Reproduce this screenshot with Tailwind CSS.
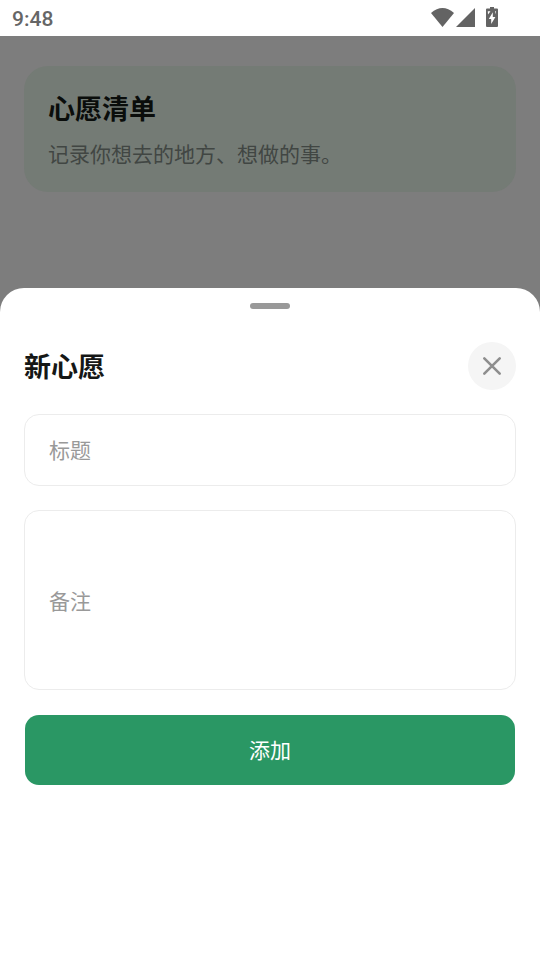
<!DOCTYPE html>
<html lang="zh-CN">
<head>
<meta charset="utf-8">
<title>心愿清单</title>
<script src="https://cdn.jsdelivr.net/npm/@tailwindcss/browser@4"></script>
</head>
<body class="relative h-[960px] w-[540px] overflow-hidden bg-[#7d7d7d] font-[Roboto,'Noto_Sans_CJK_SC',sans-serif]">
<header class="flex h-9 items-center justify-between bg-white pl-3 pr-[42px] text-[#666]">
  <span class="pt-0.5 text-[21px] leading-6 font-medium">9:48</span>
  <div class="flex items-start">
    <svg class="h-5 w-[23px]" viewBox="0 0 23 20" fill="#636363"><path d="M0 5Q11.5-5 23 5L11.5 19Z"/></svg>
    <svg class="ml-[2px] h-5 w-[19px]" viewBox="0 0 19 20" fill="#636363"><path d="M19 0V19H0Z"/></svg>
    <svg class="-mt-px ml-[11px] h-5 w-3" viewBox="0 0 12 20" fill="#636363"><path d="M4 0h4v1.5h3a1 1 0 0 1 1 1V19a1 1 0 0 1-1 1H1a1 1 0 0 1-1-1V2.500a1 1 0 0 1 1-1h3z"/><path fill="#fff" d="M6.800 5.200L2.800 12h2.400v5L9.400 10H6.800zM1.800 4.300h2.700L2 7.500zM9 4.300h1v3z"/></svg>
  </div>
</header>
<main class="px-6 pt-[30px]">
  <section class="h-[126px] rounded-3xl bg-[#747b75] px-6 pt-[26px]">
    <h1 class="text-[27px] leading-9 font-bold text-[#0a0d0b]">心愿清单</h1>
    <p class="mt-[13px] text-[21px] leading-7 text-[#414643]">记录你想去的地方、想做的事。</p>
  </section>
</main>
<section class="absolute inset-x-0 top-[288px] bottom-0 rounded-t-3xl bg-white px-6 pt-[15px]">
  <div class="mx-auto h-1.5 w-10 rounded-full bg-[#999]"></div>
  <div class="mt-[33px] flex h-12 items-center justify-between">
    <h2 class="pt-[3px] text-[27px] leading-9 font-bold text-[#151716]">新心愿</h2>
    <button class="flex size-12 items-center justify-center rounded-full bg-[#f5f5f5]" aria-label="关闭"><svg class="size-5" viewBox="0 0 20 20" fill="none" stroke="#8e8e8e" stroke-width="2.6" stroke-linecap="round"><path d="M2.300 2.300L17.700 17.700M17.700 2.300L2.300 17.700"/></svg></button>
  </div>
  <div class="mt-6 flex h-[72px] items-center rounded-[15px] border-[1.500px] border-[#ececec] px-6 pt-[3px] text-[21px] text-[#999]">标题</div>
  <div class="mt-6 flex h-[180px] items-center rounded-[15px] border-[1.500px] border-[#ececec] px-6 pt-[5px] text-[21px] text-[#999]">备注</div>
  <button class="mx-auto mt-[25px] flex h-[70px] w-[490px] items-center justify-center rounded-[14px] bg-[#2a9764] pt-[4px] text-[21px] text-white">添加</button>
</section>
</body>
</html>
